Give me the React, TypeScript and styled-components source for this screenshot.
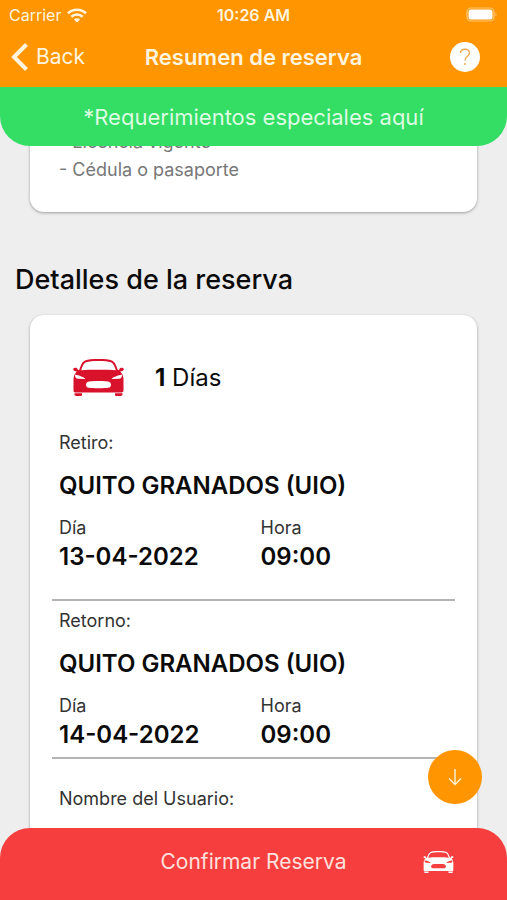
import React from "react";
import styled, { createGlobalStyle } from "styled-components";

const GlobalStyle = createGlobalStyle`
  *, *::before, *::after { box-sizing: border-box; }
  body { margin: 0; background: #eeeeee; color: #0b0b0b; }
  body, button { font-family: Inter, "Liberation Sans", sans-serif; }
  h1, h2, h3, p, dl, dt, dd, ul { margin: 0; padding: 0; }
`;

const Screen = styled.div`
  display: flex;
  flex-direction: column;
  height: 100vh;
  overflow: hidden;
`;

const Header = styled.header`
  background: #ff9500;
  color: #fff4de;
`;

const StatusBar = styled.div`
  display: grid;
  grid-template-columns: 1fr auto 1fr;
  align-items: center;
  height: 30px;
  padding: 0 9px;
  font-size: 16px;
  line-height: 20px;
`;

const Carrier = styled.span`
  display: flex;
  align-items: center;
  gap: 6px;
`;

const Clock = styled.span`
  font-weight: 600;
`;

const BatterySlot = styled.span`
  display: flex;
  justify-content: flex-end;
`;

const NavBar = styled.nav`
  display: grid;
  grid-template-columns: 1fr auto 1fr;
  align-items: center;
  height: 57px;
  padding: 0 11px 4px;
`;

const BackButton = styled.button`
  display: flex;
  align-items: center;
  gap: 8px;
  justify-self: start;
  padding: 0;
  border: 0;
  background: none;
  color: inherit;
  font-size: 21px;
  line-height: 28px;
  cursor: pointer;
`;

const Title = styled.h1`
  font-size: 22px;
  line-height: 28px;
  font-weight: 600;
`;

const HelpButton = styled.button`
  display: grid;
  place-items: center;
  justify-self: end;
  width: 30px;
  height: 30px;
  margin-right: 16px;
  padding: 0;
  border: 0;
  border-radius: 50%;
  background: #ffffff;
  color: #f0a850;
  cursor: pointer;
`;

const Stage = styled.div`
  position: relative;
  flex: 1;
  min-height: 0;
`;

const Banner = styled.button`
  position: absolute;
  inset: 0 0 auto;
  z-index: 1;
  height: 59px;
  padding: 0;
  border: 0;
  border-radius: 0 0 30px 30px;
  background: #34dd64;
  color: #dcfbe2;
  font-size: 22px;
  line-height: 28px;
  cursor: pointer;
`;

const Scroller = styled.main`
  height: 100%;
  overflow-y: auto;
  scrollbar-width: none;
  padding-top: 20px;
`;

const Card = styled.section`
  margin: 0 30px;
  padding: 0 22px;
  border-radius: 14px;
  background: #ffffff;
  box-shadow: 0 1px 3px rgba(0, 0, 0, 0.35);
`;

const Requirements = styled.ul`
  padding: 21px 7px 28px;
  list-style: none;
  color: #777777;
  font-size: 18px;
  line-height: 28px;
`;

const SectionTitle = styled.h2`
  padding: 50px 15px 17px;
  font-size: 27px;
  line-height: 36px;
  font-weight: 500;
`;

const Duration = styled.p`
  display: flex;
  align-items: center;
  gap: 31px;
  padding: 44px 21px 36px;
  font-size: 24px;
  line-height: 37px;
`;

const Leg = styled.div<{ $roomy?: boolean }>`
  padding-bottom: ${({ $roomy }) => ($roomy ? 27 : 7)}px;
  border-bottom: 2px solid #b4b4b4;

  & + & { padding-top: 9px; }
`;

const Label = styled.p`
  padding: 0 7px;
  color: #333333;
  font-size: 18px;
  line-height: 22px;
`;

const Place = styled.h3`
  padding: 17px 7px 16px;
  font-size: 24px;
  line-height: 30px;
  font-weight: 600;
`;

const Schedule = styled.div`
  display: grid;
  grid-template-columns: 1fr 1fr;
`;

const Value = styled.p`
  padding: 3px 7px 0;
  font-size: 24px;
  line-height: 30px;
  font-weight: 600;
`;

const UserBlock = styled.div`
  padding: 29px 0 130px;
`;

const ScrollDown = styled.button`
  position: absolute;
  right: 25px;
  bottom: 96px;
  z-index: 1;
  display: grid;
  place-items: center;
  width: 54px;
  height: 54px;
  padding: 0;
  border: 0;
  border-radius: 50%;
  background: #ff9500;
  color: #fff0d0;
  cursor: pointer;
`;

const Confirm = styled.button`
  position: absolute;
  inset: auto 0 0;
  z-index: 1;
  display: grid;
  grid-template-columns: 1fr auto 1fr;
  align-items: center;
  height: 72px;
  padding: 0 53px 4px;
  border: 0;
  border-radius: 30px 30px 0 0;
  background: #f73e3e;
  color: #ffe0dc;
  font-size: 21px;
  line-height: 28px;
  cursor: pointer;

  & > svg { justify-self: end; }
`;

const ConfirmLabel = styled.span`
  grid-column: 2;
`;

function CarIcon({ width, height, color }: { width: number; height: number; color: string }) {
  return (
    <svg width={width} height={height} viewBox="0 0 51 37" aria-hidden="true">
      <path
        fill={color}
        fillRule="evenodd"
        d="M12 1.500C15 .4 19 0 25.500 0S36 .4 39 1.500C42 3 43.500 7 44.800 11L46 11.200C46.200 9.300 47.500 8.800 49 8.800C50.500 8.800 51 9.800 50.700 11C50.400 12 48.500 12.200 47.200 12.400C49.500 14.500 50.300 17 50.500 20V31C50.500 32.800 49.800 33.500 48.500 33.500H2.500C1.200 33.500.5 32.800.5 31V20C.7 17 1.500 14.500 3.800 12.400C2.500 12.200.6 12 .3 11C0 9.800.5 8.800 2 8.800C3.500 8.800 4.800 9.300 5 11.200L6.200 11C7.500 7 9 3 12 1.500ZM13 3.200C10.500 4.500 9.200 8 8.200 11.300C13 10.800 18 10.700 25.500 10.700S38 10.800 42.800 11.300C41.800 8 40.500 4.500 38 3.200C35 2.200 31 1.900 25.500 1.900S16 2.200 13 3.200ZM2 15.500C2 18.500 3 19.600 5 19.700L12.500 20C11 18 6 16.500 2 15.500ZM49 15.500C45 16.500 40 18 38.500 20L46 19.700C48 19.600 49 18.500 49 15.500ZM25.500 22C20 22 16 22.200 14.500 23C12.500 24 12.500 27.500 14.500 28.500C16.500 29.400 34.500 29.400 36.500 28.500C38.500 27.500 38.500 24 36.500 23C35 22.200 31 22 25.500 22Z"
      />
      <path
        fill={color}
        d="M1.500 34.300H9V35.500C9 36.600 8.500 37 7.500 37H3.500C2.200 37 1.500 36.400 1.500 35.300ZM42 34.300H49.500V35.300C49.500 36.400 48.800 37 47.500 37H43.500C42.500 37 42 36.600 42 35.500Z"
      />
    </svg>
  );
}

function WifiIcon() {
  return (
    <svg width="20" height="15" viewBox="0 0 20 15" fill="none" stroke="currentColor" strokeWidth="2.600" aria-hidden="true">
      <path d="M1 5.200C6 .6 14 .6 19 5.200" />
      <path d="M4.300 8.700C7.500 5.800 12.500 5.800 15.700 8.700" />
      <path d="M10 14.500L6.900 11.400C8.500 9.800 11.500 9.800 13.100 11.400Z" fill="currentColor" stroke="none" />
    </svg>
  );
}

function BatteryIcon() {
  return (
    <svg width="32" height="16" viewBox="0 0 32 16" aria-hidden="true">
      <rect x="1" y="1" width="27" height="13" rx="4" fill="none" stroke="#ffc878" strokeWidth="1.200" />
      <rect x="2.500" y="2.500" width="24" height="10" rx="2.500" fill="#ffffff" />
      <path d="M29.500 5.500Q31.500 7.500 29.500 9.500Z" fill="#ffc878" />
    </svg>
  );
}

interface Trip {
  label: string;
  place: string;
  date: string;
  time: string;
}

const trips: Trip[] = [
  { label: "Retiro:", place: "QUITO GRANADOS (UIO)", date: "13-04-2022", time: "09:00" },
  { label: "Retorno:", place: "QUITO GRANADOS (UIO)", date: "14-04-2022", time: "09:00" },
];

export default function App() {
  return (
    <Screen>
      <GlobalStyle />
      <Header>
        <StatusBar>
          <Carrier>
            Carrier
            <WifiIcon />
          </Carrier>
          <Clock>10:26 AM</Clock>
          <BatterySlot>
            <BatteryIcon />
          </BatterySlot>
        </StatusBar>
        <NavBar>
          <BackButton type="button">
            <svg width="17" height="28" viewBox="0 0 17 28" fill="none" stroke="currentColor" strokeWidth="4" aria-hidden="true">
              <path d="M15.500 1.500L3 14L15.500 26.500" />
            </svg>
            Back
          </BackButton>
          <Title>Resumen de reserva</Title>
          <HelpButton type="button" aria-label="Ayuda">
            <svg width="12" height="18" viewBox="0 0 12 18" fill="none" stroke="currentColor" strokeWidth="1.400" aria-hidden="true">
              <path d="M1.500 5C1.500 2.500 3.300 1.200 6 1.200S10.500 2.700 10.500 5C10.500 8.300 6 8.300 6 12.500" />
              <circle cx="6" cy="16" r="1" fill="currentColor" stroke="none" />
            </svg>
          </HelpButton>
        </NavBar>
      </Header>
      <Stage>
        <Banner type="button">*Requerimientos especiales aquí</Banner>
        <Scroller>
          <Card>
            <Requirements>
              <li>- Licencia vigente</li>
              <li>- Cédula o pasaporte</li>
            </Requirements>
          </Card>
          <SectionTitle>Detalles de la reserva</SectionTitle>
          <Card>
            <Duration>
              <CarIcon width={51} height={37} color="#d9122c" />
              <span>
                <b>1</b> Días
              </span>
            </Duration>
            {trips.map((trip, index) => (
              <Leg key={trip.label} $roomy={index === 0}>
                <Label>{trip.label}</Label>
                <Place>{trip.place}</Place>
                <Schedule>
                  <div>
                    <Label>Día</Label>
                    <Value>{trip.date}</Value>
                  </div>
                  <div>
                    <Label>Hora</Label>
                    <Value>{trip.time}</Value>
                  </div>
                </Schedule>
              </Leg>
            ))}
            <UserBlock>
              <Label>Nombre del Usuario:</Label>
            </UserBlock>
          </Card>
        </Scroller>
        <ScrollDown type="button" aria-label="Bajar">
          <svg width="14" height="18" viewBox="0 0 14 18" fill="none" stroke="currentColor" strokeWidth="1.500" aria-hidden="true">
            <path d="M7 1V16.500M1 10.500L7 16.500L13 10.500" />
          </svg>
        </ScrollDown>
        <Confirm type="button">
          <ConfirmLabel>Confirmar Reserva</ConfirmLabel>
          <CarIcon width={31} height={22} color="#ffffff" />
        </Confirm>
      </Stage>
    </Screen>
  );
}
